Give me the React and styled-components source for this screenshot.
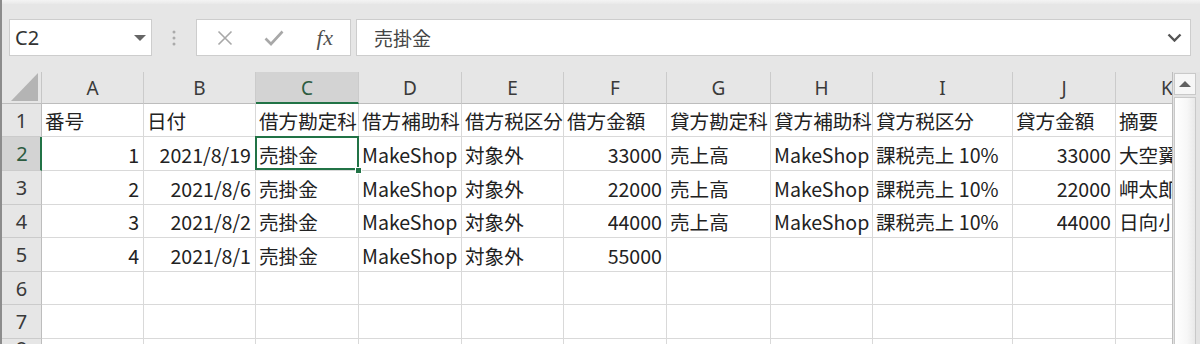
import React from "react";
import styled, { createGlobalStyle } from "styled-components";

const GlobalStyle = createGlobalStyle`
  html, body { margin: 0; padding: 0; background: #e6e6e6; }
  #root { width: 1200px; height: 344px; overflow: hidden; }
`;

const GREEN = "#217346";
const CELL_FONT = `"Noto Sans CJK JP", "Noto Sans", sans-serif`;
const UI_FONT = `"Noto Sans", "Liberation Sans", sans-serif`;

const Window = styled.div`
  width: 1200px;
  height: 344px;
  box-sizing: border-box;
  border-left: 2px solid #8c8c8c;
  background: #e6e6e6;
  display: flex;
  flex-direction: column;
  overflow: hidden;
`;

const TopStripe = styled.div`
  height: 4px;
  background: linear-gradient(#f4f4f4, #e9e9e9);
  flex: none;
`;

const FormulaBar = styled.div`
  height: 68px;
  flex: none;
  box-sizing: border-box;
  padding: 15px 9px 0 7px;
  display: flex;
  align-items: flex-start;
`;

const Box = styled.div`
  height: 37px;
  box-sizing: border-box;
  background: #fff;
  border: 1px solid #cdcdcd;
  display: flex;
  align-items: center;
`;

const NameBox = styled(Box)`
  width: 143px;
  padding: 0 5px 0 5px;
  justify-content: space-between;
  font-family: ${UI_FONT};
  font-size: 20px;
  color: #333;
`;

const Separator = styled.div`
  width: 44px;
  height: 37px;
  display: flex;
  align-items: center;
  justify-content: center;
`;

const ButtonBox = styled(Box)`
  width: 155px;
  padding: 0 0 0 18px;
`;

const IconButton = styled.div`
  width: ${(p) => p.$w}px;
  display: flex;
  align-items: center;
  justify-content: center;
`;

const Fx = styled.span`
  font-family: "Liberation Serif", "DejaVu Serif", serif;
  font-style: italic;
  font-size: 22px;
  color: #505050;
  letter-spacing: 0.5px;
`;

const FormulaInput = styled(Box)`
  flex: 1;
  margin-left: 5px;
  padding: 0 8px 0 17px;
  justify-content: space-between;
  font-family: ${CELL_FONT};
  font-size: 19px;
  color: #444;
`;

const Body = styled.div`
  flex: 1;
  display: flex;
  min-height: 0;
`;

const Sheet = styled.div`
  width: 1170px;
  flex: none;
  overflow: hidden;
  background: #fff;
`;

const Row = styled.div`
  display: flex;
  height: ${(p) => p.$h}px;
  flex: none;
`;

const Corner = styled.div`
  width: 40px;
  flex: none;
  box-sizing: border-box;
  background: #e6e6e6;
  border-right: 1px solid #c6c6c6;
  border-bottom: 1px solid #bdbdbd;
  display: flex;
  align-items: flex-end;
  justify-content: flex-end;
  padding: 0 3px 2px 0;
`;

const ColHeader = styled.div`
  width: ${(p) => p.$w}px;
  flex: none;
  box-sizing: border-box;
  background: ${(p) => (p.$sel ? "#d3d3d3" : "#e6e6e6")};
  border-right: 1px solid #cbcbcb;
  border-bottom: ${(p) => (p.$sel ? `2px solid ${GREEN}` : "1px solid #bdbdbd")};
  font-family: ${UI_FONT};
  font-size: 19px;
  color: ${(p) => (p.$sel ? "#2c5b40" : "#3a3a3a")};
  display: flex;
  align-items: center;
  justify-content: center;
  padding-top: ${(p) => (p.$sel ? 1 : 0)}px;
  white-space: nowrap;
  overflow: hidden;
`;

const RowHeader = styled.div`
  width: 40px;
  flex: none;
  box-sizing: border-box;
  background: ${(p) => (p.$sel ? "#d3d3d3" : "#e6e6e6")};
  border-right: ${(p) => (p.$sel ? `2px solid ${GREEN}` : "1px solid #bdbdbd")};
  border-bottom: 1px solid #cbcbcb;
  font-family: ${UI_FONT};
  font-size: 20px;
  color: ${(p) => (p.$sel ? "#2c5b40" : "#3a3a3a")};
  display: flex;
  align-items: center;
  justify-content: center;
  padding-left: ${(p) => (p.$sel ? 2 : 0)}px;
`;

const Cell = styled.div`
  width: ${(p) => p.$w}px;
  flex: none;
  box-sizing: border-box;
  border-right: 1px solid #d9d9d9;
  border-bottom: 1px solid #d9d9d9;
  position: relative;
  z-index: ${(p) => (p.$sel ? 2 : 0)};
  display: flex;
  align-items: center;
  justify-content: ${(p) => (p.$num ? "flex-end" : "flex-start")};
  padding: ${(p) => (p.$num ? "1px 4px 0 0" : "1px 0 0 3px")};
  font-family: ${CELL_FONT};
  font-size: 19.6px;
  color: #222;
  white-space: nowrap;

  ${(p) =>
    p.$sel &&
    `
    &::after {
      content: "";
      position: absolute;
      top: -1px; left: -1px; right: -1px; bottom: 0;
      border: 2px solid ${GREEN};
      pointer-events: none;
    }
    &::before {
      content: "";
      position: absolute;
      right: -4px; bottom: -4px;
      width: 5px; height: 5px;
      background: ${GREEN};
      border: 1px solid #fff;
      z-index: 3;
    }
  `}
`;

const CellText = styled.span`
  overflow: hidden;
  display: block;
  max-width: 100%;
`;

const Scrollbar = styled.div`
  flex: 1;
  display: flex;
  flex-direction: column;
  box-sizing: border-box;
  padding: 1px 4px 0 1px;
  border-left: 1px solid #bdbdbd;
  background: #e3e3e3;
  gap: 2px;
`;

const ScrollButton = styled.div`
  height: 22px;
  box-sizing: border-box;
  background: #f6f6f6;
  border: 1px solid #c9c9c9;
  display: flex;
  align-items: center;
  justify-content: center;
`;

const Thumb = styled.div`
  flex: 1;
  box-sizing: border-box;
  border: 1px solid #c9c9c9;
  border-bottom: none;
  background: linear-gradient(to right, #ffffff, #f7f7f7 60%, #e9e9e9);
`;

const COLS = [
  { k: "A", w: 102 },
  { k: "B", w: 112 },
  { k: "C", w: 103 },
  { k: "D", w: 103 },
  { k: "E", w: 102 },
  { k: "F", w: 103 },
  { k: "G", w: 104 },
  { k: "H", w: 102 },
  { k: "I", w: 140 },
  { k: "J", w: 103 },
  { k: "K", w: 103 },
];

const NUM_COLS = new Set([0, 1, 5, 9]);

const ROWS = [
  ["番号", "日付", "借方勘定科目", "借方補助科目", "借方税区分", "借方金額", "貸方勘定科目", "貸方補助科目", "貸方税区分", "貸方金額", "摘要"],
  ["1", "2021/8/19", "売掛金", "MakeShop", "対象外", "33000", "売上高", "MakeShop", "課税売上 10%", "33000", "大空翼"],
  ["2", "2021/8/6", "売掛金", "MakeShop", "対象外", "22000", "売上高", "MakeShop", "課税売上 10%", "22000", "岬太郎"],
  ["3", "2021/8/2", "売掛金", "MakeShop", "対象外", "44000", "売上高", "MakeShop", "課税売上 10%", "44000", "日向小次郎"],
  ["4", "2021/8/1", "売掛金", "MakeShop", "対象外", "55000", "", "", "", "", ""],
  ["", "", "", "", "", "", "", "", "", "", ""],
  ["", "", "", "", "", "", "", "", "", "", ""],
  ["", "", "", "", "", "", "", "", "", "", ""],
];

const ROW_H = [33, 34, 34, 33, 34, 33, 34, 20];

export default function App() {
  return (
    <>
      <GlobalStyle />
      <Window>
        <TopStripe />
        <FormulaBar>
          <NameBox>
            <span>C2</span>
            <svg width="12" height="6" viewBox="0 0 12 6">
              <polygon points="0,0 12,0 6,6" fill="#666" />
            </svg>
          </NameBox>
          <Separator>
            <svg width="4" height="16" viewBox="0 0 4 16">
              <circle cx="2" cy="2" r="1.5" fill="#aaa" />
              <circle cx="2" cy="8" r="1.5" fill="#aaa" />
              <circle cx="2" cy="14" r="1.5" fill="#aaa" />
            </svg>
          </Separator>
          <ButtonBox>
            <IconButton $w={20}>
              <svg width="16" height="16" viewBox="0 0 16 16">
                <path d="M1.5 1.5 L14.5 14.5 M14.5 1.5 L1.5 14.5" stroke="#a8a8a8" strokeWidth="1.6" fill="none" />
              </svg>
            </IconButton>
            <IconButton $w={78}>
              <svg width="20" height="16" viewBox="0 0 20 16">
                <path d="M1.5 8.5 L7 14 L18.5 1.5" stroke="#a8a8a8" strokeWidth="2.6" fill="none" />
              </svg>
            </IconButton>
            <IconButton $w={24}>
              <Fx>fx</Fx>
            </IconButton>
          </ButtonBox>
          <FormulaInput>
            <span>売掛金</span>
            <svg width="15" height="9" viewBox="0 0 15 9">
              <path d="M1.5 1.5 L7.5 7.5 L13.5 1.5" stroke="#555" strokeWidth="2.4" fill="none" />
            </svg>
          </FormulaInput>
        </FormulaBar>
        <Body>
          <Sheet>
            <Row $h={32}>
              <Corner>
                <svg width="27" height="28" viewBox="0 0 27 28">
                  <polygon points="27,0 27,28 0,28" fill="#b4b4b4" />
                </svg>
              </Corner>
              {COLS.map((c) => (
                <ColHeader key={c.k} $w={c.w} $sel={c.k === "C"}>
                  {c.k}
                </ColHeader>
              ))}
            </Row>
            {ROWS.map((r, ri) => (
              <Row key={ri} $h={ROW_H[ri]}>
                <RowHeader $sel={ri === 1}>{ri + 1}</RowHeader>
                {COLS.map((c, ci) => (
                  <Cell
                    key={c.k}
                    $w={c.w}
                    $num={ri > 0 && NUM_COLS.has(ci)}
                    $sel={ri === 1 && ci === 2}
                  >
                    <CellText>{r[ci]}</CellText>
                  </Cell>
                ))}
              </Row>
            ))}
          </Sheet>
          <Scrollbar>
            <ScrollButton>
              <svg width="12" height="6" viewBox="0 0 12 6">
                <polygon points="0,6 12,6 6,0" fill="#606060" />
              </svg>
            </ScrollButton>
            <Thumb />
          </Scrollbar>
        </Body>
      </Window>
    </>
  );
}
